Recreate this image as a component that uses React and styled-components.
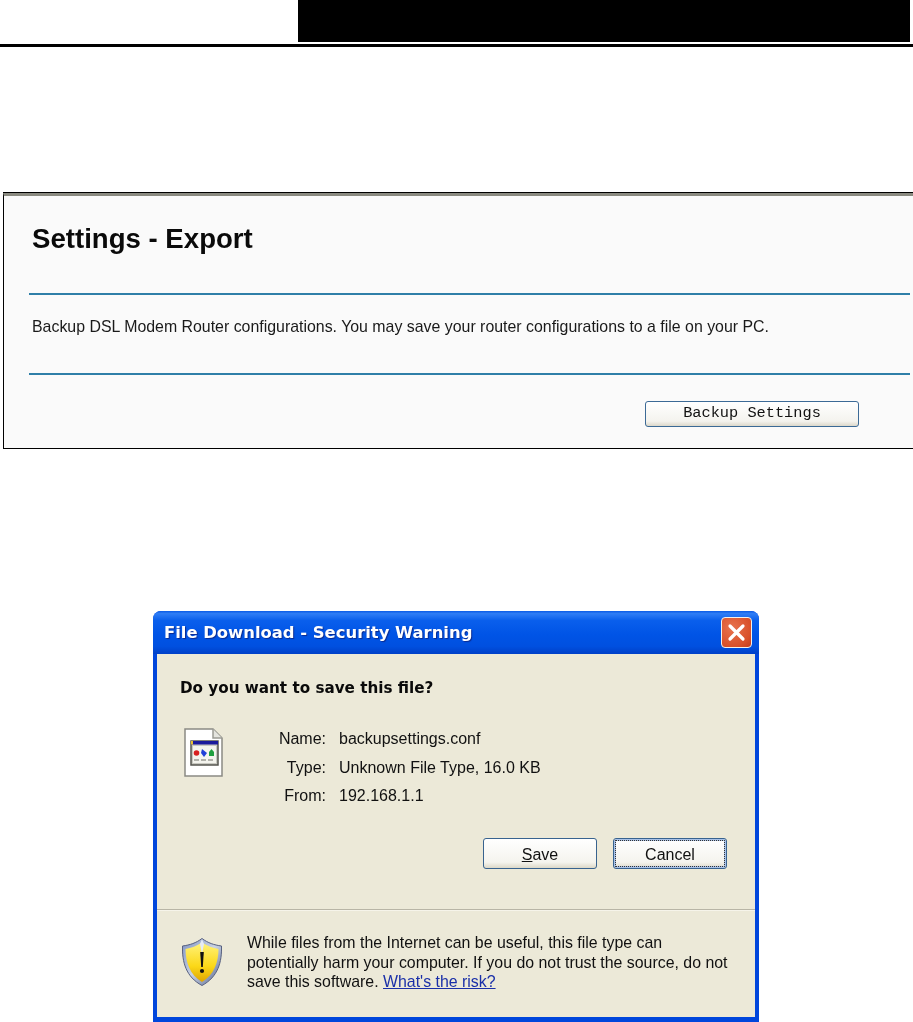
import React from 'react'
import styled, { createGlobalStyle } from 'styled-components'

const GlobalStyle = createGlobalStyle`
  html, body {
    margin: 0;
    padding: 0;
    background: #fff;
  }
  body {
    font-family: "Liberation Sans", Arial, sans-serif;
    color: #000;
  }
`

const Page = styled.div`
  width: 913px;
  height: 1022px;
  overflow: hidden;
`

const Header = styled.header`
  display: flex;
  justify-content: flex-end;
  padding-right: 3px;
  height: 42px;
`

const HeaderBar = styled.div`
  width: 612px;
  background: #000;
`

const Rule = styled.div`
  margin-top: 2px;
  height: 3px;
  background: #000;
`

const Panel = styled.section`
  box-sizing: border-box;
  margin: 146px 0 0 3px;
  width: 912px;
  height: 256px;
  border: 1px solid #000;
  border-top: 3px solid #8a8a80;
  box-shadow: 0 -1px 0 #000;
  background: #fafafa;
  padding-left: 25px;
  filter: blur(0.3px);
`

const PanelTitle = styled.h1`
  margin: 0;
  padding: 27px 0 0 3px;
  height: 97px;
  box-sizing: border-box;
  font-size: 27.6px;
  line-height: 32px;
  font-weight: 700;
  color: #0a0a0a;
`

const PanelLine = styled.div`
  height: 2px;
  margin-right: 4px;
  background: #2f7fa8;
`

const PanelText = styled.p`
  margin: 0;
  height: 78px;
  box-sizing: border-box;
  padding: 23px 0 0 3px;
  font-size: 15.9px;
  line-height: 18px;
  color: #1a1a1a;
  white-space: nowrap;
`

const PanelActions = styled.div`
  display: flex;
  justify-content: flex-end;
  padding: 26px 55px 0 0;
`

const BackupButton = styled.button`
  box-sizing: border-box;
  width: 214px;
  height: 26px;
  padding: 0 0 3px;
  border: 1px solid #3c6a96;
  border-radius: 3px;
  background: linear-gradient(#ffffff, #f4f3ee 80%, #dcd8cb);
  font-family: "Liberation Mono", monospace;
  font-size: 15.3px;
  color: #111;
`

const Dialog = styled.section`
  box-sizing: border-box;
  margin: 162px 0 0 153px;
  width: 606px;
  height: 411px;
  display: flex;
  flex-direction: column;
  border-radius: 8px 8px 0 0;
  background: #0046dc;
  filter: blur(0.3px);
`

const TitleBar = styled.div`
  height: 43px;
  flex: none;
  display: flex;
  align-items: center;
  justify-content: space-between;
  padding: 0 7px 0 11px;
  border-radius: 8px 8px 0 0;
  background: linear-gradient(#0a5ae6 0, #2f7df5 6%, #0a5fec 22%, #0054e6 55%, #0050e0 82%, #0040c8 100%);
`

const TitleText = styled.h2`
  margin: 0;
  font-family: "DejaVu Sans", sans-serif;
  font-size: 16.4px;
  font-weight: 700;
  color: #fff;
  text-shadow: 1px 1px 1px #0a2a90;
  white-space: nowrap;
`

const CloseButton = styled.div`
  width: 31px;
  height: 31px;
  box-sizing: border-box;
  display: flex;
  align-items: center;
  justify-content: center;
  border: 1px solid #f4f0ea;
  border-radius: 4px;
  background: radial-gradient(circle at 35% 35%, #e8734e, #d8502a 70%, #c23c1c);
`

const DialogBody = styled.div`
  flex: 1;
  margin: 0 4px 5px;
  display: flex;
  flex-direction: column;
  background: #ece9d8;
`

const TopPart = styled.div`
  height: 255px;
  flex: none;
  box-sizing: border-box;
  padding: 25px 28px 0 23px;
`

const Question = styled.h3`
  margin: 0;
  font-family: "DejaVu Sans", sans-serif;
  font-size: 15.2px;
  line-height: 18px;
  font-weight: 700;
  color: #0a0a0a;
`

const FileInfo = styled.div`
  display: flex;
  margin-top: 29px;
  padding-left: 4px;
`

const FileIcon = styled.svg`
  flex: none;
  width: 39px;
  height: 49px;
  margin-top: 2px;
`

const InfoGrid = styled.dl`
  margin: -1px 0 0 0;
  display: grid;
  grid-template-columns: 103px auto;
  column-gap: 13px;
  grid-auto-rows: 28.5px;
  align-items: center;
  font-size: 16px;
  color: #111;
`

const InfoLabel = styled.dt`
  text-align: right;
`

const InfoValue = styled.dd`
  margin: 0;
`

const Buttons = styled.div`
  display: flex;
  justify-content: flex-end;
  gap: 16px;
  margin-top: 27px;
`

const DialogButton = styled.button`
  box-sizing: border-box;
  width: 114px;
  height: 31px;
  padding: 4px 0 0;
  border: 1px solid #38638f;
  border-radius: 3px;
  background: linear-gradient(#ffffff, #f5f4ee 80%, #dcd8c8);
  font-family: "Liberation Sans", sans-serif;
  font-size: 16px;
  color: #111;
  outline: ${props => (props.$focused ? '1px dotted #333' : 'none')};
  outline-offset: -3px;
  box-shadow: ${props => (props.$focused ? 'inset 0 0 0 2px #a9c2e8' : 'none')};
`

const Underlined = styled.span`
  text-decoration: underline;
`

const Separator = styled.div`
  flex: none;
  height: 1px;
  background: #b8b5a6;
  border-bottom: 1px solid #f6f4ea;
`

const Warning = styled.div`
  display: flex;
  padding: 27px 0 0 25px;
`

const ShieldIcon = styled.svg`
  flex: none;
  width: 40px;
  height: 48px;
`

const WarningText = styled.p`
  margin: -5px 0 0 25px;
  font-size: 15.9px;
  line-height: 19.5px;
  color: #111;
  white-space: nowrap;
`

const RiskLink = styled.a`
  color: #1a2fa8;
  text-decoration: underline;
`

const rows = [
  ['Name:', 'backupsettings.conf'],
  ['Type:', 'Unknown File Type, 16.0 KB'],
  ['From:', '192.168.1.1']
]

const App = () => (
  <Page>
    <GlobalStyle />
    <Header>
      <HeaderBar />
    </Header>
    <Rule />

    <Panel>
      <PanelTitle>Settings - Export</PanelTitle>
      <PanelLine />
      <PanelText>
        Backup DSL Modem Router configurations. You may save your router configurations to a file on your PC.
      </PanelText>
      <PanelLine />
      <PanelActions>
        <BackupButton>Backup Settings</BackupButton>
      </PanelActions>
    </Panel>

    <Dialog>
      <TitleBar>
        <TitleText>File Download - Security Warning</TitleText>
        <CloseButton>
          <svg width="19" height="19" viewBox="0 0 19 19">
            <path d="M3 3 L16 16 M16 3 L3 16" stroke="#fff" strokeWidth="3.2" strokeLinecap="round" />
          </svg>
        </CloseButton>
      </TitleBar>
      <DialogBody>
        <TopPart>
          <Question>Do you want to save this file?</Question>
          <FileInfo>
            <FileIcon viewBox="0 0 39 49">
              <path d="M1 1 H29 L38 10 V48 H1 Z" fill="#fff" stroke="#8a8a84" strokeWidth="1.5" />
              <path d="M29 1 V10 H38" fill="#e4e4de" stroke="#9a9a94" strokeWidth="1.5" />
              <rect x="7" y="13" width="27" height="24" fill="#c8c8c0" stroke="#55554f" strokeWidth="1.5" />
              <rect x="7" y="13" width="27" height="3.5" fill="#1a1a9c" />
              <rect x="7" y="13" width="2" height="3.5" fill="#e8c030" />
              <rect x="9" y="18" width="23" height="17" fill="#f4f4ee" />
              <circle cx="12.5" cy="25" r="2.8" fill="#d82020" />
              <path d="M18 21 L23 25 L20 29 L17 25 Z" fill="#2040d8" />
              <path d="M25 28 V24 L27.5 21 L30 24 V28 Z" fill="#20a040" />
              <path d="M10 32 H15 M17 32 H22 M24 32 H29" stroke="#9a9a94" strokeWidth="1.5" />
            </FileIcon>
            <InfoGrid>
              {rows.map(([label, value]) => (
                <React.Fragment key={label}>
                  <InfoLabel>{label}</InfoLabel>
                  <InfoValue>{value}</InfoValue>
                </React.Fragment>
              ))}
            </InfoGrid>
          </FileInfo>
          <Buttons>
            <DialogButton><Underlined>S</Underlined>ave</DialogButton>
            <DialogButton $focused>Cancel</DialogButton>
          </Buttons>
        </TopPart>
        <Separator />
        <Warning>
          <ShieldIcon viewBox="0 0 40 48">
            <defs>
              <linearGradient id="shieldRim" x1="0" y1="0" x2="1" y2="1">
                <stop offset="0" stopColor="#7f93c4" />
                <stop offset="0.5" stopColor="#c9d2e4" />
                <stop offset="1" stopColor="#4f5f8a" />
              </linearGradient>
              <linearGradient id="shieldFill" x1="0" y1="0" x2="0" y2="1">
                <stop offset="0" stopColor="#fff27a" />
                <stop offset="0.6" stopColor="#fbd818" />
                <stop offset="1" stopColor="#dfa400" />
              </linearGradient>
            </defs>
            <path d="M20 0.5 C26 5 32 7 39.5 8 C40 24 36 39 20 47.5 C4 39 0 24 0.5 8 C8 7 14 5 20 0.5 Z" fill="url(#shieldRim)" stroke="#57607f" strokeWidth="1" />
            <path d="M20 4.5 C25 8 31 10 36.5 11 C36.5 24 32 37 20 44 C8 37 3.5 24 3.5 11 C9 10 15 8 20 4.5 Z" fill="url(#shieldFill)" />
            <path d="M20 1 L22 6 L20 16 L18 6 Z" fill="#e6ebf5" />
            <path d="M18.2 14 H21.8 L20.8 29 H19.2 Z" fill="#111" />
            <circle cx="20" cy="33" r="2.1" fill="#111" />
          </ShieldIcon>
          <WarningText>
            While files from the Internet can be useful, this file type can<br />
            potentially harm your computer. If you do not trust the source, do not<br />
            save this software. <RiskLink href="#">What's the risk?</RiskLink>
          </WarningText>
        </Warning>
      </DialogBody>
    </Dialog>
  </Page>
)

export default App
